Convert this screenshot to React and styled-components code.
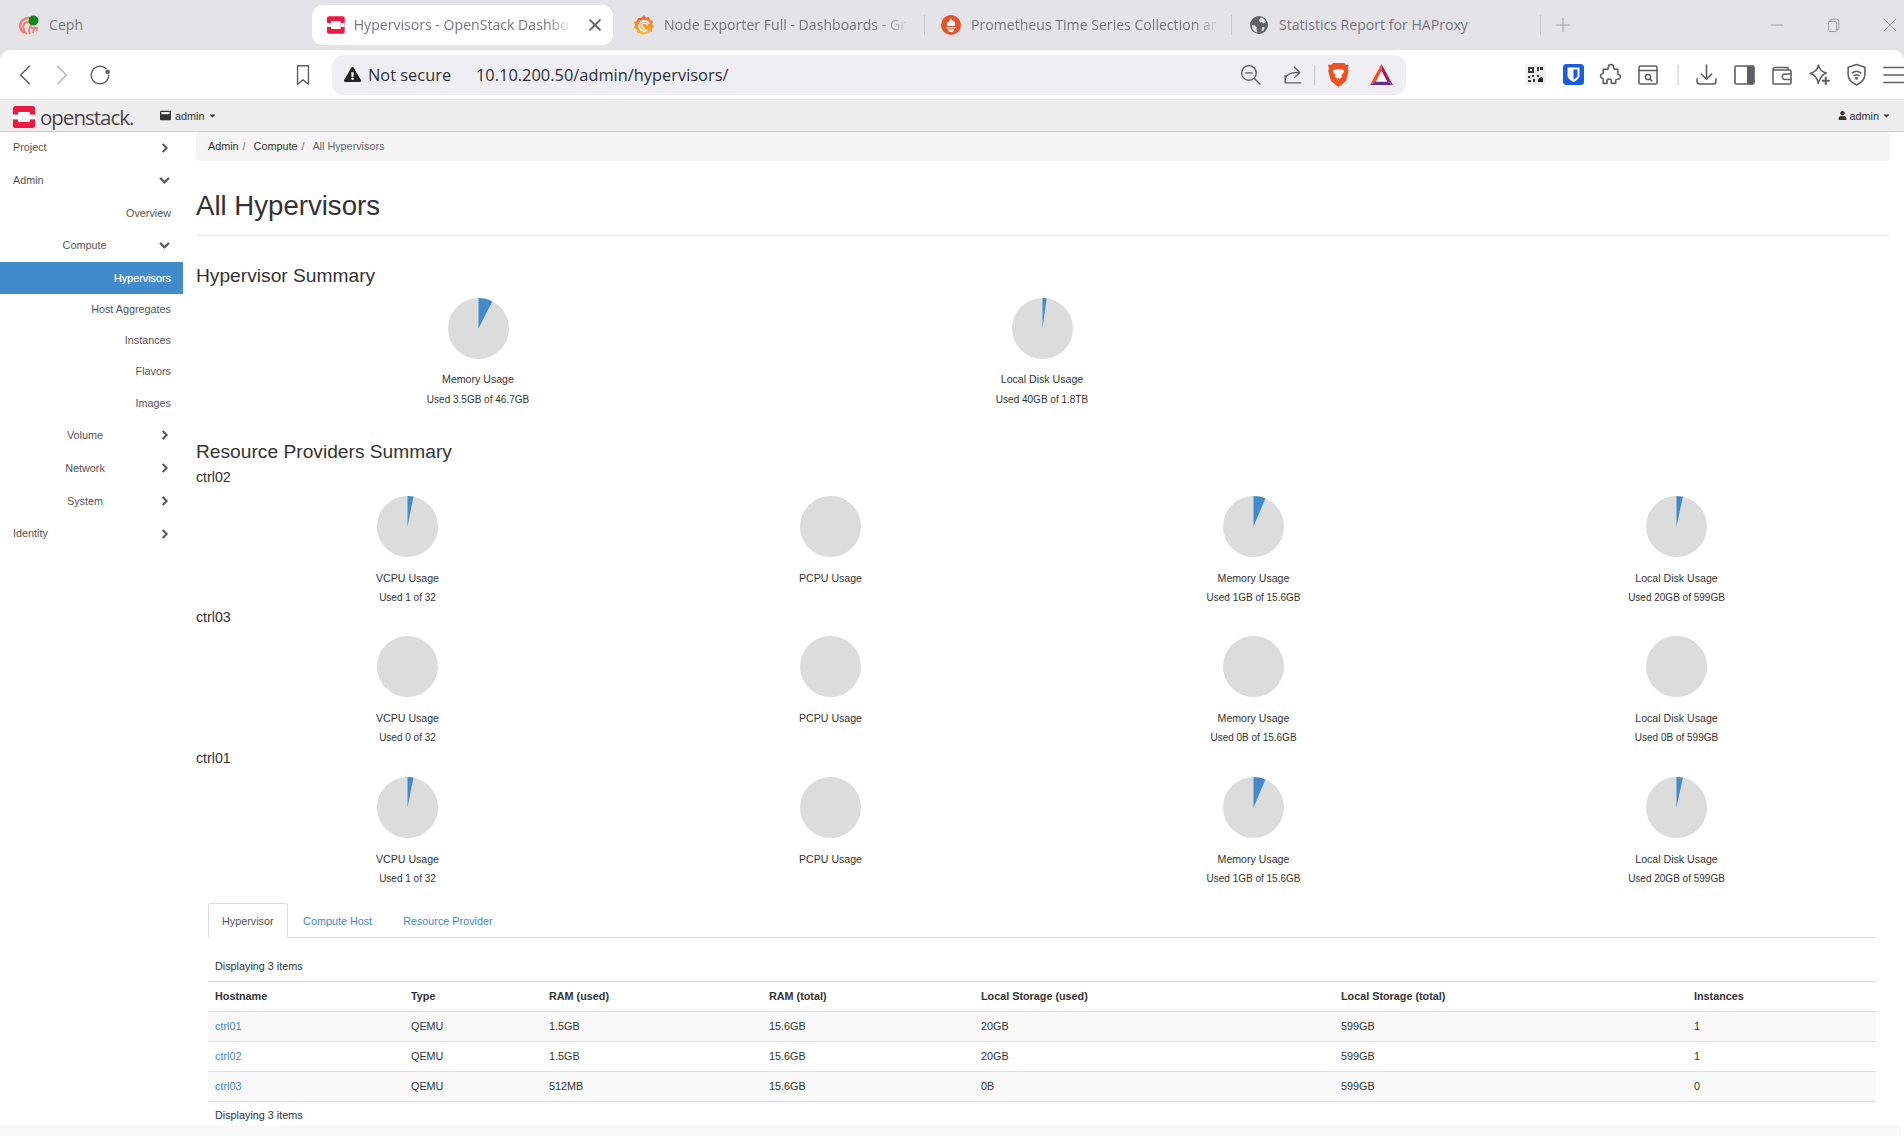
import React from 'react'
import styled, { createGlobalStyle } from 'styled-components'
import { FaChevronRight, FaChevronDown, FaCaretDown, FaUser, FaWindowMaximize, FaExclamationTriangle } from 'react-icons/fa'

const GlobalStyle = createGlobalStyle`
  html, body { margin: 0; padding: 0; background: #fff; }
  * { box-sizing: border-box; }
`

const Page = styled.div`
  width: 1904px;
  height: 1136px;
  overflow: hidden;
  display: flex;
  flex-direction: column;
  font-family: "Liberation Sans", Arial, sans-serif;
  font-size: 10.8px;
  color: #333;
  background: #e3e3e8;
`

/* browser chrome */
const TabStrip = styled.div`
  height: 50px;
  background: #e3e3e8;
  display: flex;
  align-items: center;
  flex: none;
  font-family: "Open Sans", sans-serif;
  font-size: 14.1px;
  color: #77777c;
`
const Tab = styled.div`
  width: ${props => props.$width}px;
  height: 40px;
  padding-left: ${props => props.$pad}px;
  display: flex;
  align-items: center;
  gap: ${props => props.$gap || 10}px;
  border-radius: 11px;
  background: ${props => (props.$active ? '#fff' : 'transparent')};
  flex: none;
`
const TabTitle = styled.span`
  white-space: nowrap;
  margin-top: -2px;
  ${props => props.$fade && 'mask-image: linear-gradient(to right, #000 90%, rgba(0,0,0,.15) 100%);'}
`
const TabClose = styled.span`
  width: 40px;
  margin-left: auto;
  display: flex;
  justify-content: center;
  color: #66666b;
`
const TabDivider = styled.div`
  width: 1px;
  height: 20px;
  background: #c9c9ce;
  flex: none;
`
const PlusSign = styled.div`
  width: 44px;
  display: flex;
  justify-content: center;
  color: #a5a5aa;
`
const WindowControls = styled.div`
  margin-left: auto;
  display: flex;
  align-items: center;
  color: #85858a;
`
const WindowButton = styled.div`
  width: ${props => props.$width}px;
  margin-left: ${props => props.$offset || 0}px;
  display: flex;
  justify-content: center;
`
const Toolbar = styled.div`
  height: 50px;
  background: #fff;
  border-radius: 10px 10px 0 0;
  display: flex;
  align-items: center;
  padding-left: 6px;
  flex: none;
  border-bottom: 1px solid #e5e5e8;
`
const ToolButton = styled.div`
  width: 37.5px;
  height: 30px;
  display: flex;
  align-items: center;
  justify-content: center;
  flex: none;
  margin-left: ${props => props.$offset || 0}px;
  color: ${props => (props.$dim ? '#b5b5ba' : '#5d5d62')};
`
const UrlPill = styled.div`
  width: 1074px;
  height: 40px;
  margin-left: 10px;
  background: #eeeef3;
  border-radius: 12px;
  display: flex;
  align-items: center;
  padding-left: 12px;
  font-family: "Open Sans", sans-serif;
  font-size: 16.4px;
  color: #303033;
  flex: none;
`
const NotSecure = styled.span`
  margin-left: 7px;
  width: 108px;
`
const UrlText = styled.span`
  flex: 1;
`
const PillIcons = styled.div`
  display: flex;
  align-items: center;
  padding-right: 5px;
`
const PillIcon = styled.div`
  width: ${props => props.$width}px;
  display: flex;
  justify-content: center;
  color: #5d5d62;
`
const ToolDivider = styled.div`
  width: ${props => props.$width}px;
  display: flex;
  justify-content: center;
  flex: none;
  &::after {
    content: '';
    width: ${props => props.$line || 1}px;
    height: ${props => props.$height || 20}px;
    background: ${props => props.$color || '#c8c8cc'};
  }
`

/* horizon navbar */
const Navbar = styled.div`
  height: 32px;
  background: #eee;
  border-bottom: 1px solid #ccc;
  display: flex;
  align-items: center;
  padding: 0 13px 0 13px;
  flex: none;
`
const Brand = styled.div`
  display: flex;
  align-items: center;
  gap: 5px;
  width: 147px;
  margin-top: 3px;
`
const BrandName = styled.span`
  font-family: "Open Sans", sans-serif;
  font-size: 20.5px;
  letter-spacing: -1px;
  line-height: 22px;
  color: #4b4542;
`
const NavMenu = styled.div`
  display: flex;
  align-items: center;
  gap: ${props => (props.$right ? 3 : 4)}px;
  color: #333;
  margin-left: ${props => (props.$right ? 'auto' : '0')};
  svg { flex: none; }
`

/* layout */
const Body = styled.div`
  height: 993px;
  display: flex;
  flex: none;
  background: #fff;
`
const Sidebar = styled.nav`
  width: 183px;
  flex: none;
  color: #555;
`
const NavRow = styled.div`
  height: ${props => props.$height}px;
  display: flex;
  align-items: center;
  padding: ${props => (props.$nested ? '0 13px 0 10px' : '0 13px 0 13px')};
  background: ${props => (props.$active ? '#428bca' : 'transparent')};
  color: ${props => (props.$active ? '#fff' : '#555')};
  ${props => props.$active && 'text-shadow: 0 0 1px rgba(255,255,255,.6);'}
`
const NavLabel = styled.span`
  flex: 1;
  margin-top: -2px;
  text-align: ${props => props.$align};
`
const NavLeaf = styled(NavRow)`
  padding: 0 12px 1px 0;
  justify-content: flex-end;
`
const ChevronRight = styled(FaChevronRight)`
  font-size: 10px;
  margin-top: -1px;
  stroke: currentColor;
  stroke-width: 30px;
`
const ChevronDown = styled(FaChevronDown)`
  font-size: 11px;
  margin-top: -1px;
  stroke: currentColor;
  stroke-width: 30px;
`
const Main = styled.main`
  flex: 1;
  padding: 0 14px 0 13px;
`
const Breadcrumb = styled.div`
  height: 29px;
  width: 1694px;
  background: #f5f5f5;
  border-radius: 4px;
  display: flex;
  align-items: center;
  padding: 0 0 2px 12px;
`
const Crumb = styled.span`
  color: #333;
  &::after { content: '/'; color: #777; margin: 0 8px 0 4px; }
`
const CrumbCurrent = styled.span`
  color: #666;
`
const PageHeader = styled.div`
  width: 1694px;
  padding: 30px 0 14px;
  border-bottom: 1px solid #e6e6e6;
`
const Title = styled.h1`
  margin: 0;
  font-size: 27.6px;
  font-weight: 400;
  line-height: 30px;
  color: #333;
`
const SectionTitle = styled.h3`
  margin: ${props => props.$top}px 0 0;
  font-size: 19.2px;
  font-weight: 400;
  line-height: 24px;
  color: #333;
`
const PieRow = styled.div`
  display: grid;
  width: 1692px;
  grid-template-columns: repeat(${props => props.$columns}, 1fr);
  margin-top: 10px;
`
const PieCell = styled.div`
  display: flex;
  flex-direction: column;
  align-items: center;
`
const PieLabel = styled.div`
  margin-top: 13px;
  line-height: 14px;
  font-size: 10.6px;
`
const PieUsed = styled.div`
  margin-top: 7px;
  line-height: 13px;
  font-size: 10px;
`
const HostList = styled.div`
  margin-top: 3.5px;
`
const HostGroup = styled.div`
  height: 140.5px;
  ${PieLabel} { margin-top: 14px; }
  ${PieUsed} { margin-top: 6px; }
`
const HostName = styled.div`
  font-size: 14.2px;
  line-height: 18px;
  color: #333;
`
const TabPanel = styled.div`
  margin: 14px 14px 0 12px;
`
const DetailTabs = styled.div`
  display: flex;
  height: 35px;
  border-bottom: 1px solid #ddd;
`
const DetailTab = styled.div`
  height: 35px;
  padding: ${props => (props.$active ? '0 13px' : '0 14.5px')};
  display: flex;
  align-items: center;
  border: 1px solid ${props => (props.$active ? '#ddd' : 'transparent')};
  border-bottom-color: ${props => (props.$active ? '#fff' : 'transparent')};
  border-radius: 3px 3px 0 0;
  color: ${props => (props.$active ? '#555' : '#428bca')};
`
const TableCaption = styled.div`
  padding-left: 7px;
  line-height: 14px;
  margin-top: ${props => props.$top}px;
`
const Table = styled.table`
  width: 100%;
  table-layout: fixed;
  border-collapse: collapse;
  margin-top: 8px;
  border-top: 1px solid #ddd;
`
const HeadCell = styled.th`
  height: 30px;
  padding: 0 0 1px 7px;
  text-align: left;
  font-weight: 700;
  border-bottom: 1px solid #ddd;
  color: #333;
`
const Cell = styled.td`
  height: 30px;
  padding: 0 0 2px 7px;
  border-bottom: 1px solid #ddd;
  color: #333;
`
const Row = styled.tr`
  background: ${props => (props.$odd ? '#f9f9f9' : '#fff')};
`
const HostLink = styled.a`
  color: #428bca;
`
const FooterStrip = styled.div`
  flex: 1;
  background: #f9f9f9;
  border-right: 3px solid #fff;
`

/* drawn icons */
const OpenStackLogo = ({ size = 22 }) => (
  <svg width={size} height={size} viewBox="0 0 22 22">
    <rect width="22" height="22" rx="2.5" fill="#ed1944" />
    <rect x="5" y="6" width="12" height="10" rx="1" fill="#fff" />
    <rect x="0" y="8.6" width="5" height="4.8" fill="#fff" />
    <rect x="17" y="8.6" width="5" height="4.8" fill="#fff" />
  </svg>
)

const CephIcon = () => (
  <svg width="22" height="22" viewBox="0 0 22 22" fill="none">
    <path d="M6 19C1 15 1 9 5 6s9-3 10 1" stroke="#ef8079" strokeWidth="2.4" />
    <path d="M9 20c-4-3-5-8-2-11 3-2 6-1 6 2 0 2-2 3-2 5l1 4" stroke="#ef8079" strokeWidth="2" />
    <path d="M15 19l1-5M19 17l-1-3M13 14h7" stroke="#ef8079" strokeWidth="1.8" />
    <circle cx="15.5" cy="6.5" r="5" fill="#0a8a14" />
  </svg>
)

const GrafanaIcon = () => (
  <svg width="20" height="22" viewBox="0 0 20 22">
    <defs>
      <linearGradient id="graf" x1="0" y1="1" x2="0" y2="0">
        <stop offset="0" stopColor="#fcc52c" />
        <stop offset="1" stopColor="#f05a28" />
      </linearGradient>
    </defs>
    <path d="M10 1l2 3 3-1 1 3 3 1-1 3 2 2-2 3 0 3-3 0-2 2-3 0-2 1-2-2-3 0 0-3-3-2 1-3-1-3 3-1 1-3 3 0z" fill="url(#graf)" />
    <path d="M15 10a5 5 0 1 0-2 6" fill="none" stroke="#fff" strokeWidth="2" />
    <path d="M13 11.500a2.500 2.500 0 1 0-2 2.500" fill="none" stroke="#fff" strokeWidth="1.200" />
  </svg>
)

const PrometheusIcon = () => (
  <svg width="20" height="20" viewBox="0 0 20 20">
    <circle cx="10" cy="10" r="10" fill="#e6522c" />
    <path d="M10 3c.4 2 2 2.400 2.400 4 .4-.4.500-1 .500-1.400 1 1.400 1.600 3 1.100 5.400H6c-.5-2.400.4-3.600 1.300-4.800 0 .8.300 1.200.7 1.300C7.800 5.800 9 4.800 10 3z" fill="#fff" />
    <rect x="5.500" y="12" width="9" height="1.400" fill="#fff" />
    <path d="M7 14.400h6c0 1.600-1.400 2.600-3 2.600s-3-1-3-2.600z" fill="#fff" />
  </svg>
)

const GlobeIcon = () => (
  <svg width="18" height="18" viewBox="0 0 18 18">
    <circle cx="9" cy="9" r="9" fill="#5f6368" />
    <path d="M11 1.500c2 .5 4 2 5 4.500l-2.500 1.500L12 6l-2 .5L9 4zM2 9l3 .5 2 2-.5 2 1 3C4 16 2 13 2 9zM12 11l3 .5-2 3.500-1.500.5z" fill="#e3e3e8" />
  </svg>
)

const StrokeIcon = ({ size = 22, width = 1.6, children }) => (
  <svg width={size} height={size} viewBox="0 0 22 22" fill="none" stroke="currentColor" strokeWidth={width} strokeLinecap="round" strokeLinejoin="round">
    {children}
  </svg>
)

const BraveIcon = () => (
  <svg width="21" height="25" viewBox="0 0 21 25">
    <path d="M5 1h11l2 2 2-.4.800 1-1 3 .8 2.400L18 19l-6 5-1.500.8L9 24l-6-5L.2 9l.8-2.400-1-3 .8-1L3 3z" fill="#f1511f" />
    <path d="M10.500 7c1.300 0 2 .6 3 .4l2.500.6-.6 3-2 2 .6 2-2 1.400-1.500 2.600-1.500-2.600-2-1.400.6-2-2-2-.6-3 2.500-.6c1 .2 1.700-.4 3-.4z" fill="#fff" />
    <path d="M10.500 16l1.600 1-1.600 1.400L8.900 17z" fill="#f1511f" />
  </svg>
)

const BatIcon = () => (
  <svg width="23" height="22" viewBox="0 0 23 22">
    <path d="M11.500 0L0 21l6-3.500L11.500 7z" fill="#ff4724" />
    <path d="M11.500 0L23 21l-6-3.500L11.500 7z" fill="#9e1f63" />
    <path d="M0 21h23l-6-3.500H6z" fill="#662d91" />
    <path d="M11.500 7L6 17.500h11z" fill="#fff" />
  </svg>
)

const QrIcon = () => (
  <svg width="21" height="21" viewBox="0 0 21 21">
    <rect width="21" height="21" rx="2" fill="#f0f0f0" />
    <path d="M3 3h6v6H3zM5 5v2h2V5zM12 3h2v4h-2zM15 3h3v3h-3zM3 12h2v2H3zM7 11h2v2H7zM3 16h3v2H3zM8 15h2v3H8zM12 11h2v2h-2z" fill="#3a3a3a" fillRule="evenodd" />
    <path d="M13 18a4 4 0 0 1 4-5 4 4 0 0 1 1 4v1z" fill="#222" />
  </svg>
)

const BitwardenIcon = () => (
  <svg width="21" height="21" viewBox="0 0 21 21">
    <rect width="21" height="21" rx="3.500" fill="#175ddc" />
    <path d="M4.500 3.500h12v8c0 3-3 5-6 6.500-3-1.500-6-3.500-6-6.500z" fill="#fff" />
    <path d="M10.500 5.500h4v6c0 1.800-2 3-4 4.300z" fill="#175ddc" />
  </svg>
)

const Pie = ({ used = 0, total = 1 }) => {
  const r = 30.5
  const angle = (used / total) * 2 * Math.PI
  const x = 30.5 + r * Math.sin(angle)
  const y = 30.5 - r * Math.cos(angle)
  return (
    <svg width="61" height="61" viewBox="0 0 61 61">
      <circle cx="30.5" cy="30.5" r={r} fill="#dcdcdc" />
      {used > 0 && <path d={`M30.5 30.5 L30.5 0 A${r} ${r} 0 0 1 ${x} ${y} Z`} fill="#428bca" />}
    </svg>
  )
}

const PieChart = ({ label, text, used, total }) => (
  <PieCell>
    <Pie used={used} total={total} />
    <PieLabel>{label}</PieLabel>
    {text && <PieUsed>{text}</PieUsed>}
  </PieCell>
)

const hosts = [
  { name: 'ctrl02', vcpu: 'Used 1 of 32', vcpuUsed: 1, mem: 'Used 1GB of 15.6GB', memUsed: 1, disk: 'Used 20GB of 599GB', diskUsed: 20 },
  { name: 'ctrl03', vcpu: 'Used 0 of 32', vcpuUsed: 0, mem: 'Used 0B of 15.6GB', memUsed: 0, disk: 'Used 0B of 599GB', diskUsed: 0 },
  { name: 'ctrl01', vcpu: 'Used 1 of 32', vcpuUsed: 1, mem: 'Used 1GB of 15.6GB', memUsed: 1, disk: 'Used 20GB of 599GB', diskUsed: 20 },
]

const rows = [
  ['ctrl01', 'QEMU', '1.5GB', '15.6GB', '20GB', '599GB', '1'],
  ['ctrl02', 'QEMU', '1.5GB', '15.6GB', '20GB', '599GB', '1'],
  ['ctrl03', 'QEMU', '512MB', '15.6GB', '0B', '599GB', '0'],
]

const columns = [
  ['Hostname', 196],
  ['Type', 138],
  ['RAM (used)', 220],
  ['RAM (total)', 212],
  ['Local Storage (used)', 360],
  ['Local Storage (total)', 353],
  ['Instances', 189],
]

const App = () => (
  <Page>
    <GlobalStyle />
    <TabStrip>
      <Tab $width={312} $pad={18} $gap={9}>
        <CephIcon />
        <TabTitle>Ceph</TabTitle>
      </Tab>
      <Tab $width={301} $pad={15} $gap={9} $active>
        <OpenStackLogo size={20} />
        <TabTitle $fade>Hypervisors - OpenStack Dashbo</TabTitle>
        <TabClose>
          <StrokeIcon size={18} width={2.4}><path d="M5 5l12 12M17 5L5 17" /></StrokeIcon>
        </TabClose>
      </Tab>
      <Tab $width={311} $pad={21}>
        <GrafanaIcon />
        <TabTitle $fade>Node Exporter Full - Dashboards - Gr</TabTitle>
      </Tab>
      <TabDivider />
      <Tab $width={306} $pad={16}>
        <PrometheusIcon />
        <TabTitle $fade>Prometheus Time Series Collection ar</TabTitle>
      </Tab>
      <TabDivider />
      <Tab $width={308} $pad={18} $gap={11}>
        <GlobeIcon />
        <TabTitle>Statistics Report for HAProxy</TabTitle>
      </Tab>
      <TabDivider />
      <PlusSign>
        <StrokeIcon size={18} width={1.4}><path d="M11 3v16M3 11h16" /></StrokeIcon>
      </PlusSign>
      <WindowControls>
        <WindowButton $width={56}><StrokeIcon size={16} width={1}><path d="M3 11h16" /></StrokeIcon></WindowButton>
        <WindowButton $width={56}><StrokeIcon size={16} width={1}><rect x="5" y="6" width="11" height="14" rx="1.500" /><path d="M8 6V3h8a3 3 0 0 1 3 3v11h-3" /></StrokeIcon></WindowButton>
        <WindowButton $width={28} $offset={15}><StrokeIcon size={16} width={1}><path d="M3 3l16 16M19 3L3 19" /></StrokeIcon></WindowButton>
      </WindowControls>
    </TabStrip>

    <Toolbar>
      <ToolButton><StrokeIcon size={24} width={1.3}><path d="M15 3L7 11l8 8" /></StrokeIcon></ToolButton>
      <ToolButton $dim><StrokeIcon size={24} width={1.3}><path d="M7 3l8 8-8 8" /></StrokeIcon></ToolButton>
      <ToolButton>
        <StrokeIcon size={24} width={1.2}>
          <path d="M16.600 5.300A8 8 0 1 0 19 11" />
          <circle cx="18" cy="8" r="1.500" fill="currentColor" />
        </StrokeIcon>
      </ToolButton>
      <ToolButton $offset={166}><StrokeIcon size={24} width={1.3}><path d="M6 2.500h10v17l-5-4-5 4z" /></StrokeIcon></ToolButton>
      <UrlPill>
        <FaExclamationTriangle size={17} color="#222" />
        <NotSecure>Not secure</NotSecure>
        <UrlText>10.10.200.50/admin/hypervisors/</UrlText>
        <PillIcons>
          <PillIcon $width={43}><StrokeIcon size={23} width={1.3}><circle cx="9.500" cy="9.500" r="7" /><path d="M6.500 9.500h6M15 15l5 5" /></StrokeIcon></PillIcon>
          <PillIcon $width={42}><StrokeIcon size={23} width={1.3}><path d="M3 12v7h15M3 19v-2c0-5 4-8 13-8M12 4l5 5-5 5" /></StrokeIcon></PillIcon>
          <ToolDivider $width={1} />
          <PillIcon $width={46}><BraveIcon /></PillIcon>
          <PillIcon $width={40}><BatIcon /></PillIcon>
        </PillIcons>
      </UrlPill>
      <ToolButton $offset={111}><QrIcon /></ToolButton>
      <ToolButton><BitwardenIcon /></ToolButton>
      <ToolButton>
        <StrokeIcon size={23} width={1.5}>
          <path d="M9 4a2.500 2.500 0 0 1 5 0c0 1 1 2 2 2h2v4c0 1 1 1 2 1.500a2.500 2.500 0 0 1-2 4c-1 0-2 0-2 1v3h-4c-1-.5 0-1.500 0-2a2.200 2.200 0 0 0-4.500 0c0 .5 1 1.500 0 2H4v-4c0-1-1-1-2-1.500a2.500 2.500 0 0 1 2-4V6h3c1 0 2-1 2-2z" />
        </StrokeIcon>
      </ToolButton>
      <ToolButton>
        <StrokeIcon size={22} width={1.5}>
          <rect x="2" y="2" width="18" height="18" rx="1.500" />
          <path d="M2 6.500h18" />
          <circle cx="11" cy="13" r="2.600" />
          <path d="M13 15l2 2" />
        </StrokeIcon>
      </ToolButton>
      <ToolDivider $width={21} $line={2} $height={20} $color="#e3e3e8" />
      <ToolButton>
        <StrokeIcon size={23} width={1.5}><path d="M11 2v13M6 10.500l5 5 5-5M2 15v3a2 2 0 0 0 2 2h14a2 2 0 0 0 2-2v-3" /></StrokeIcon>
      </ToolButton>
      <ToolButton>
        <svg width="21" height="20" viewBox="0 0 21 20">
          <rect x="1" y="1" width="19" height="18" rx="1.500" fill="#fff" stroke="#5d5d62" strokeWidth="1.600" />
          <rect x="13" y="1" width="7" height="18" fill="#5d5d62" />
        </svg>
      </ToolButton>
      <ToolButton>
        <StrokeIcon size={22} width={1.5}>
          <path d="M17 6V3.500H4A2 2 0 0 0 2 5.500v13.500a1 1 0 0 0 1 1h16a1 1 0 0 0 1-1V7a1 1 0 0 0-1-1H2" />
          <path d="M20 10h-6a2.500 2.500 0 0 0 0 5.500h6" />
        </StrokeIcon>
      </ToolButton>
      <ToolButton>
        <StrokeIcon size={23} width={1.5}>
          <path d="M10 2c1 4.500 3 6.500 7.500 7.500-3 1-5 2.500-6.500 7-1 .5-1 2-1 3C9 15 6.500 11 2 10c4.500-1 7-3.500 8-8z" />
          <path d="M17 14v6M14 17h6" strokeWidth="2" />
        </StrokeIcon>
      </ToolButton>
      <ToolButton>
        <StrokeIcon size={23} width={1.5}>
          <path d="M11 1.500l8 2.500v7c0 5-3.500 8-8 10-4.500-2-8-5-8-10V4z" />
          <path d="M7 9.500c2.400-2 5.600-2 8 0M8.700 12c1.400-1 3.200-1 4.600 0" />
          <circle cx="11" cy="14.500" r=".7" fill="currentColor" />
        </StrokeIcon>
      </ToolButton>
      <ToolButton>
        <StrokeIcon size={22} width={1.6}><path d="M1 3.500h20M1 11h20M1 18.500h20" /></StrokeIcon>
      </ToolButton>
    </Toolbar>

    <Navbar>
      <Brand>
        <OpenStackLogo />
        <BrandName>openstack.</BrandName>
      </Brand>
      <NavMenu>
        <FaWindowMaximize size={11} />
        admin
        <FaCaretDown size={9} />
      </NavMenu>
      <NavMenu $right>
        <FaUser size={9} />
        admin
        <FaCaretDown size={9} />
      </NavMenu>
    </Navbar>

    <Body>
      <Sidebar>
        <NavRow $height={32}><NavLabel $align="left">Project</NavLabel><ChevronRight /></NavRow>
        <NavRow $height={33}><NavLabel $align="left">Admin</NavLabel><ChevronDown /></NavRow>
        <NavLeaf $height={32}>Overview</NavLeaf>
        <NavRow $height={33} $nested><NavLabel $align="center">Compute</NavLabel><ChevronDown /></NavRow>
        <NavLeaf $height={32} $active>Hypervisors</NavLeaf>
        <NavLeaf $height={31}>Host Aggregates</NavLeaf>
        <NavLeaf $height={31}>Instances</NavLeaf>
        <NavLeaf $height={31}>Flavors</NavLeaf>
        <NavLeaf $height={32}>Images</NavLeaf>
        <NavRow $height={33} $nested><NavLabel $align="center">Volume</NavLabel><ChevronRight /></NavRow>
        <NavRow $height={33} $nested><NavLabel $align="center">Network</NavLabel><ChevronRight /></NavRow>
        <NavRow $height={33} $nested><NavLabel $align="center">System</NavLabel><ChevronRight /></NavRow>
        <NavRow $height={32}><NavLabel $align="left">Identity</NavLabel><ChevronRight /></NavRow>
      </Sidebar>

      <Main>
        <Breadcrumb>
          <Crumb>Admin</Crumb>
          <Crumb>Compute</Crumb>
          <CrumbCurrent>All Hypervisors</CrumbCurrent>
        </Breadcrumb>
        <PageHeader>
          <Title>All Hypervisors</Title>
        </PageHeader>

        <SectionTitle $top={28}>Hypervisor Summary</SectionTitle>
        <PieRow $columns={3}>
          <PieChart label="Memory Usage" text="Used 3.5GB of 46.7GB" used={3.5} total={46.7} />
          <PieChart label="Local Disk Usage" text="Used 40GB of 1.8TB" used={40} total={1843} />
        </PieRow>

        <SectionTitle $top={34}>Resource Providers Summary</SectionTitle>
        <HostList>
          {hosts.map(h => (
            <HostGroup key={h.name}>
              <HostName>{h.name}</HostName>
              <PieRow $columns={4}>
                <PieChart label="VCPU Usage" text={h.vcpu} used={h.vcpuUsed} total={32} />
                <PieChart label="PCPU Usage" />
                <PieChart label="Memory Usage" text={h.mem} used={h.memUsed} total={15.6} />
                <PieChart label="Local Disk Usage" text={h.disk} used={h.diskUsed} total={599} />
              </PieRow>
            </HostGroup>
          ))}
        </HostList>

        <TabPanel>
          <DetailTabs>
            <DetailTab $active>Hypervisor</DetailTab>
            <DetailTab>Compute Host</DetailTab>
            <DetailTab>Resource Provider</DetailTab>
          </DetailTabs>
          <TableCaption $top={21}>Displaying 3 items</TableCaption>
          <Table>
            <colgroup>
              {columns.map(([name, width]) => <col key={name} width={width} />)}
            </colgroup>
            <thead>
              <tr>
                {columns.map(([name]) => <HeadCell key={name}>{name}</HeadCell>)}
              </tr>
            </thead>
            <tbody>
              {rows.map((row, i) => (
                <Row key={row[0]} $odd={i % 2 === 0}>
                  {row.map((value, j) => (
                    <Cell key={j}>{j === 0 ? <HostLink>{value}</HostLink> : value}</Cell>
                  ))}
                </Row>
              ))}
            </tbody>
          </Table>
          <TableCaption $top={6}>Displaying 3 items</TableCaption>
        </TabPanel>
      </Main>
    </Body>
    <FooterStrip />
  </Page>
)

export default App
